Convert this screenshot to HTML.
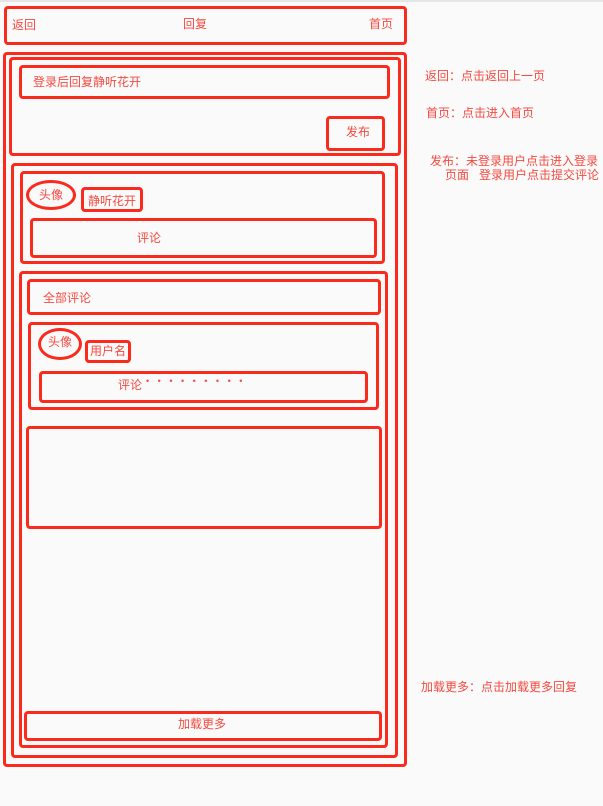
<!DOCTYPE html>
<html><head><meta charset="utf-8"><style>
html,body{margin:0;padding:0;}
body{width:603px;height:806px;background:#fafafa;position:relative;overflow:hidden;font-family:"Liberation Sans","Noto Sans CJK SC",sans-serif;font-size:12px;color:#f44a40;}
.topbar{position:absolute;left:0;top:0;width:603px;height:2px;background:#e6e6e6;}
.b{position:absolute;border:3px solid #fa2a1c;border-radius:4px;box-sizing:border-box;}
.e{position:absolute;border:3px solid #fa2a1c;border-radius:50%;box-sizing:border-box;}
.t{position:absolute;white-space:nowrap;line-height:14px;}
</style></head><body>
<div class="topbar"></div>
<div class="b" style="left:4px;top:6px;width:403px;height:39px;"></div>
<div class="t" style="left:12px;top:18px;">返回</div>
<div class="t" style="left:183px;top:17px;">回复</div>
<div class="t" style="left:369px;top:17px;">首页</div>

<div class="b" style="left:3px;top:52px;width:404px;height:715px;"></div>
<div class="b" style="left:9px;top:57px;width:392px;height:99px;"></div>
<div class="b" style="left:19px;top:65px;width:371px;height:34px;"></div>
<div class="t" style="left:33px;top:75px;">登录后回复静听花开</div>
<div class="b" style="left:326px;top:116px;width:59px;height:35px;"></div>
<div class="t" style="left:346px;top:125px;">发布</div>

<div class="b" style="left:11px;top:163px;width:387px;height:595px;"></div>
<div class="b" style="left:20px;top:171px;width:365px;height:93px;"></div>
<div class="e" style="left:26px;top:180px;width:50px;height:30px;"></div>
<div class="t" style="left:39px;top:188px;">头像</div>
<div class="b" style="left:81px;top:187px;width:62px;height:25px;"></div>
<div class="t" style="left:88px;top:194px;">静听花开</div>
<div class="b" style="left:30px;top:218px;width:347px;height:40px;"></div>
<div class="t" style="left:137px;top:231px;">评论</div>

<div class="b" style="left:19px;top:271px;width:369px;height:477px;"></div>
<div class="b" style="left:27px;top:279px;width:354px;height:36px;"></div>
<div class="t" style="left:43px;top:291px;">全部评论</div>
<div class="b" style="left:28px;top:322px;width:351px;height:88px;"></div>
<div class="e" style="left:38px;top:328px;width:44px;height:32px;"></div>
<div class="t" style="left:48px;top:335px;">头像</div>
<div class="b" style="left:85px;top:340px;width:46px;height:23px;"></div>
<div class="t" style="left:90px;top:344px;">用户名</div>
<div class="b" style="left:39px;top:371px;width:329px;height:32px;"></div>
<div class="t" style="left:118px;top:378px;">评论<span style="font-size:9px;letter-spacing:8.5px;position:relative;top:-5px;margin-left:4px;">•••••••••</span></div>
<div class="b" style="left:26px;top:426px;width:356px;height:103px;"></div>
<div class="b" style="left:24px;top:711px;width:358px;height:30px;"></div>
<div class="t" style="left:178px;top:717px;">加载更多</div>

<div class="t" style="left:425px;top:69px;">返回：点击返回上一页</div>
<div class="t" style="left:426px;top:106px;">首页：点击进入首页</div>
<div class="t" style="left:430px;top:154px;">发布：未登录用户点击进入登录</div>
<div class="t" style="left:445px;top:168px;">页面&nbsp;&nbsp;&nbsp;登录用户点击提交评论</div>
<div class="t" style="left:421px;top:680px;">加载更多：点击加载更多回复</div>
</body></html>
